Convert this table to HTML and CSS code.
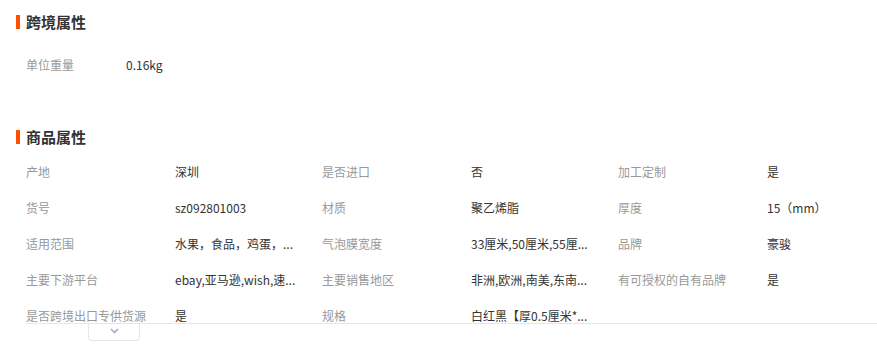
FILE: index.html
```html
<!DOCTYPE html>
<html lang="zh-CN">
<head>
<meta charset="utf-8">
<link rel="stylesheet" href="styles.css">
</head>
<body>
<div class="page">
  <h2 class="section-title first">跨境属性</h2>
  <div class="attrs single">
    <div class="attr"><span class="label">单位重量</span><span class="value">0.16kg</span></div>
  </div>

  <h2 class="section-title second">商品属性</h2>
  <div class="attrs-wrap">
    <div class="attrs grid">
      <div class="attr"><span class="label">产地</span><span class="value">深圳</span></div>
      <div class="attr"><span class="label">是否进口</span><span class="value">否</span></div>
      <div class="attr"><span class="label">加工定制</span><span class="value">是</span></div>

      <div class="attr"><span class="label">货号</span><span class="value">sz092801003</span></div>
      <div class="attr"><span class="label">材质</span><span class="value">聚乙烯脂</span></div>
      <div class="attr"><span class="label">厚度</span><span class="value">15（mm）</span></div>

      <div class="attr"><span class="label">适用范围</span><span class="value">水果，食品，鸡蛋，...</span></div>
      <div class="attr"><span class="label">气泡膜宽度</span><span class="value">33厘米,50厘米,55厘...</span></div>
      <div class="attr"><span class="label">品牌</span><span class="value">豪骏</span></div>

      <div class="attr"><span class="label">主要下游平台</span><span class="value">ebay,亚马逊,wish,速...</span></div>
      <div class="attr"><span class="label">主要销售地区</span><span class="value">非洲,欧洲,南美,东南...</span></div>
      <div class="attr"><span class="label">有可授权的自有品牌</span><span class="value">是</span></div>

      <div class="attr"><span class="label">是否跨境出口专供货源</span><span class="value">是</span></div>
      <div class="attr"><span class="label">规格</span><span class="value">白红黑【厚0.5厘米*...</span></div>
    </div>
  </div>
  <div class="toggle-row">
    <button class="toggle" type="button" aria-label="展开">
      <svg width="9" height="6" viewBox="0 0 9 6"><path d="M1 1 L4.5 4.5 L8 1" fill="none" stroke="#8fa3c0" stroke-width="1.3"/></svg>
    </button>
  </div>
</div>
</body>
</html>
```
FILE: styles.css
```css
html, body {
  margin: 0;
  padding: 0;
  background: #fff;
}
body {
  font-family: "Noto Sans CJK SC", "Noto Sans", sans-serif;
  font-size: 12px;
  color: #333;
}
.page {
  width: 877px;
}
.section-title {
  margin: 0 0 0 16px;
  padding-left: 6px;
  border-left: 4px solid #ff5000;
  height: 14px;
  line-height: 14px;
  font-size: 15px;
  font-weight: bold;
  color: #333;
}
.section-title.first {
  margin-top: 15px;
}
.section-title.second {
  margin-top: 47px;
}
.attrs {
  margin-left: 26px;
}
.attrs.single {
  margin-top: 18px;
}
.attrs.single .label {
  width: 100px;
}
.attr {
  display: flex;
  align-items: center;
  height: 36px;
  line-height: 16px;
}
.label {
  flex: none;
  width: 149px;
  color: #999;
  white-space: nowrap;
}
.value {
  color: #333;
  white-space: nowrap;
}
.attrs-wrap {
  margin: 10px 0 0 26px;
  height: 169px;
  overflow: hidden;
  border-bottom: 1px solid #e6e6e6;
}
.attrs.grid {
  margin-left: 0;
  display: grid;
  grid-template-columns: 296px 296px 259px;
}
.toggle-row {
  padding-left: 88px;
}
.toggle {
  display: flex;
  align-items: flex-start;
  justify-content: center;
  width: 52px;
  height: 17px;
  padding: 4px 0 0;
  margin: 0;
  background: #fff;
  border: 1px solid #e6e6e6;
  border-top: none;
  border-radius: 0 0 4px 4px;
}
```
